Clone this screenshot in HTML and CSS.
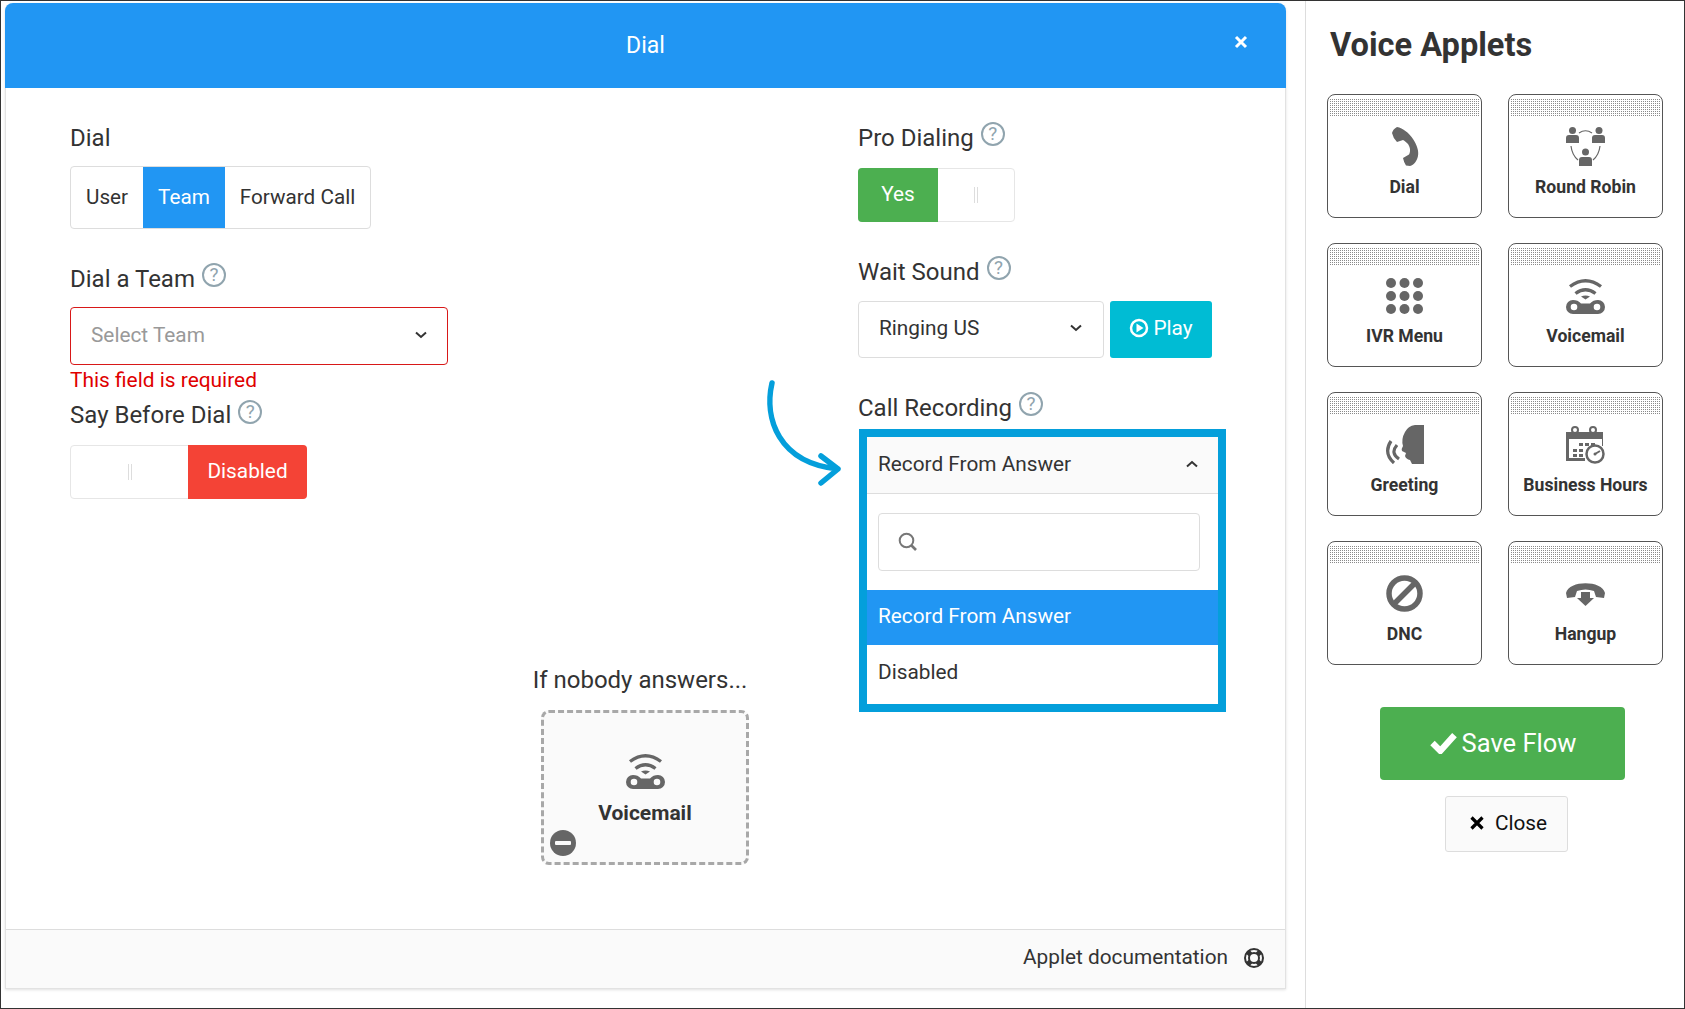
FILE: index.html
```html
<!DOCTYPE html>
<html lang="en">
<head>
<meta charset="utf-8">
<title>Dial</title>
<link rel="stylesheet" href="styles.css">
</head>
<body>
<svg class="defs" width="0" height="0">
  <defs>
    <symbol id="voicemail" viewBox="0 0 39 36">
      <path d="M4 8.500Q19.500-3 35 8.500M9.500 15.500Q19.500 8 29.500 15.500" fill="none" stroke="currentColor" stroke-width="3.400"/>
      <path d="M15 18.500Q19.500 16.500 24 18.500L19.500 21.500Z"/>
      <path fill-rule="evenodd" d="M7 22C10 22 13 23 15 25.500H24C26 23 29 22 32 22A7 7 0 0 1 32 36H7A7 7 0 0 1 7 22ZM8 25.700A3.300 3.300 0 1 0 8 32.300A3.300 3.300 0 1 0 8 25.700ZM31 25.700A3.300 3.300 0 1 0 31 32.300A3.300 3.300 0 1 0 31 25.700Z"/>
    </symbol>
  </defs>
</svg>
<div class="frame">
  <main class="modal">
    <header class="modal-head">
      <h1 class="modal-title">Dial</h1>
      <svg class="modal-x" width="14" height="14" viewBox="0 0 14 14"><path d="M2 2L12 12M12 2L2 12" stroke="#fff" stroke-width="3"/></svg>
    </header>
    <div class="modal-body">
      <section class="col-left">
        <div class="label">Dial</div>
        <div class="seg">
          <span class="seg-item">User</span>
          <span class="seg-item seg-on">Team</span>
          <span class="seg-item">Forward Call</span>
        </div>
        <div class="label label-team">Dial a Team <span class="help">?</span></div>
        <div class="select select-team">
          <span class="placeholder">Select Team</span>
          <svg class="chev" width="12" height="8" viewBox="0 0 12 8"><path d="M1 1.500L6 6L11 1.500" fill="none" stroke="#333" stroke-width="2"/></svg>
        </div>
        <div class="error">This field is required</div>
        <div class="label label-say">Say Before Dial <span class="help">?</span></div>
        <div class="toggle toggle-say">
          <span class="toggle-handle"><i></i><i></i></span>
          <span class="toggle-state state-off">Disabled</span>
        </div>
        <div class="nobody">
          <div class="nobody-text">If nobody answers...</div>
          <div class="drop-card">
            <svg class="drop-icon" width="39" height="36"><use href="#voicemail"/></svg>
            <div class="drop-name">Voicemail</div>
            <span class="remove"><i></i></span>
          </div>
        </div>
      </section>
      <section class="col-right">
        <svg class="arrow" width="80" height="110" viewBox="0 0 80 110"><path d="M9 5C1 40 15 85 75 91M58 78L75 91L58 105" fill="none" stroke="#049fdb" stroke-width="5.500" stroke-linecap="round" stroke-linejoin="round"/></svg>
        <div class="label">Pro Dialing <span class="help">?</span></div>
        <div class="toggle toggle-pro">
          <span class="toggle-state state-on">Yes</span>
          <span class="toggle-handle"><i></i><i></i></span>
        </div>
        <div class="label label-wait">Wait Sound <span class="help">?</span></div>
        <div class="sound-row">
          <div class="select select-sound">
            <span>Ringing US</span>
            <svg class="chev" width="12" height="8" viewBox="0 0 12 8"><path d="M1 1.500L6 6L11 1.500" fill="none" stroke="#333" stroke-width="2"/></svg>
          </div>
          <div class="play">
            <svg width="20" height="20" viewBox="0 0 20 20"><circle cx="10" cy="10" r="8" fill="none" stroke="#fff" stroke-width="2.500"/><path d="M7.500 5.500L14.500 10L7.500 14.500Z" fill="#fff"/></svg>
            <span>Play</span>
          </div>
        </div>
        <div class="label label-call">Call Recording <span class="help">?</span></div>
        <div class="highlight">
          <div class="dd-head">
            <span>Record From Answer</span>
            <svg width="12" height="8" viewBox="0 0 12 8"><path d="M1 6.500L6 2L11 6.500" fill="none" stroke="#333" stroke-width="2"/></svg>
          </div>
          <div class="dd-search">
            <svg width="20" height="20" viewBox="0 0 20 20"><circle cx="8.500" cy="8.500" r="6.800" fill="none" stroke="#777" stroke-width="2"/><path d="M13.500 13.500L18 18" stroke="#777" stroke-width="2.600"/></svg>
          </div>
          <div class="dd-option dd-active">Record From Answer</div>
          <div class="dd-option dd-plain">Disabled</div>
        </div>
      </section>
    </div>
    <footer class="modal-foot">
      <span>Applet documentation</span>
      <svg width="20" height="20" viewBox="0 0 20 20"><circle cx="10" cy="10" r="9" fill="none" stroke="#333" stroke-width="2"/><circle cx="10" cy="10" r="5" fill="none" stroke="#333" stroke-width="2"/><path d="M3.500 3.500L6.500 6.500M16.500 3.500L13.500 6.500M3.500 16.500L6.500 13.500M16.500 16.500L13.500 13.500" stroke="#333" stroke-width="5"/></svg>
    </footer>
  </main>
  <aside class="sidebar">
    <h2 class="side-title">Voice Applets</h2>
    <div class="applets">
      <div class="applet"><div class="applet-band"></div><div class="applet-icon">
        <svg width="28" height="39" viewBox="0 0 28 39"><path d="M6 0C12 1 18 6 22 12C26 18 28 24 27 29C26 34 23 38 19 39L15 38.500Q13 36 12 31L18 27.500C20 24 19 20 17 17C15 15 14 14 12 13L6 15Q2 11 1 6Q2 2 6 0Z"/></svg>
      </div><div class="applet-name">Dial</div></div>
      <div class="applet"><div class="applet-band"></div><div class="applet-icon">
        <svg width="39" height="39" viewBox="0 0 39 39"><circle cx="6.500" cy="3.500" r="3.500"/><circle cx="33" cy="3.500" r="3.500"/><circle cx="19.500" cy="25" r="3.500"/><path d="M0 16V11Q0 8 3 8H10Q13 8 13 11V16ZM26 16V11Q26 8 29 8H36Q39 8 39 11V16ZM13 39V33Q13 30 16 30H23Q26 30 26 33V39Z"/><path d="M13 6Q19.500 1.500 26 6M5 19Q6 28 12 33M34 19Q33 28 27 33" fill="none" stroke="currentColor" stroke-width="1.200"/></svg>
      </div><div class="applet-name">Round Robin</div></div>
      <div class="applet"><div class="applet-band"></div><div class="applet-icon">
        <svg width="37" height="36" viewBox="0 0 37 36"><circle cx="5" cy="5" r="5"/><circle cx="18.500" cy="5" r="5"/><circle cx="32" cy="5" r="5"/><circle cx="5" cy="18" r="5"/><circle cx="18.500" cy="18" r="5"/><circle cx="32" cy="18" r="5"/><circle cx="5" cy="31" r="5"/><circle cx="18.500" cy="31" r="5"/><circle cx="32" cy="31" r="5"/></svg>
      </div><div class="applet-name">IVR Menu</div></div>
      <div class="applet"><div class="applet-band"></div><div class="applet-icon">
        <svg width="39" height="36"><use href="#voicemail"/></svg>
      </div><div class="applet-name">Voicemail</div></div>
      <div class="applet"><div class="applet-band"></div><div class="applet-icon">
        <svg width="39" height="39" viewBox="0 0 39 39"><path d="M39 0V39H27Q26 37 25 35Q21 34 20 31L21 28L17 26Q16 24 18 21Q16 14 20 7Q23 1 30 0Z"/><path d="M6 16Q-2 28 9 38M12 20Q5 28 14 34" fill="none" stroke="currentColor" stroke-width="3.200"/></svg>
      </div><div class="applet-name">Greeting</div></div>
      <div class="applet"><div class="applet-band"></div><div class="applet-icon">
        <svg width="39" height="39" viewBox="0 0 39 39"><path d="M0 7H37V21H36V14H3V33H19V36H0Z"/><circle cx="9" cy="5" r="3" fill="none" stroke="currentColor" stroke-width="2"/><circle cx="27" cy="5" r="3" fill="none" stroke="currentColor" stroke-width="2"/><path d="M7 24h4v3h-4zM13 24h4v3h-4zM7 29h4v3h-4zM13 29h4v3h-4zM13 18h4v3h-4zM19 18h4v3h-4zM25 18h4v3h-4z"/><circle cx="29" cy="29" r="8.500" fill="#fff" stroke="currentColor" stroke-width="2.500"/><path d="M29 29L34 26" stroke="currentColor" stroke-width="2"/><circle cx="29" cy="29" r="1.500"/></svg>
      </div><div class="applet-name">Business Hours</div></div>
      <div class="applet"><div class="applet-band"></div><div class="applet-icon">
        <svg width="37" height="37" viewBox="0 0 37 37"><circle cx="18.500" cy="18.500" r="15.500" fill="none" stroke="currentColor" stroke-width="5.500"/><path d="M8 29L29 8" stroke="currentColor" stroke-width="5.500"/></svg>
      </div><div class="applet-name">DNC</div></div>
      <div class="applet"><div class="applet-band"></div><div class="applet-icon">
        <svg width="39" height="25" viewBox="0 0 39 25"><path d="M0 12C3-1 36-1 39 12L38 17L30 16L28 10Q19.500 7 11 10L9 16L1 17Z"/><path d="M15 11H24V17H28L19.500 25L11 17H15Z"/></svg>
      </div><div class="applet-name">Hangup</div></div>
    </div>
    <div class="save">
      <svg width="29" height="22" viewBox="0 0 27 21"><path d="M3 10.500L10.500 18L24 3" fill="none" stroke="#fff" stroke-width="6"/></svg>
      <span>Save Flow</span>
    </div>
    <div class="close">
      <svg width="14" height="14" viewBox="0 0 14 14"><path d="M1.500 1.500L12.500 12.500M12.500 1.500L1.500 12.500" stroke="#000" stroke-width="3.200"/></svg>
      <span>Close</span>
    </div>
  </aside>
</div>
</body>
</html>
```
FILE: styles.css
```css
* { box-sizing: border-box; }
html, body { margin: 0; padding: 0; background: #fff; }
body { font-family: Roboto, "Liberation Sans", sans-serif; color: #333; }
.defs { position: absolute; }
.frame {
  width: 1685px; height: 1009px; border: 1px solid #333;
  display: flex; overflow: hidden; background: #fff;
}
.modal {
  width: 1281px; height: 986px; margin: 2px 0 0 4px;
  display: flex; flex-direction: column;
  border: 1px solid #e2e2e2; border-top: 0; border-radius: 8px 8px 0 0;
  box-shadow: 0 1px 3px rgba(0,0,0,.12);
}
.modal-head {
  height: 85px; background: #2196f3; color: #fff; border-radius: 8px 8px 0 0;
  margin: 0 -1px; display: flex; align-items: center; justify-content: center; position: relative;
}
.modal-title { margin: 0; font-size: 23px; font-weight: 400; line-height: 28px; }
.modal-x { position: absolute; right: 38px; top: 32px; }
.modal-body { flex: 1; display: grid; grid-template-columns: 788px 1fr; padding: 35px 0 0 64px; }
.col-left, .col-right { display: flex; flex-direction: column; align-items: flex-start; }
.col-right { position: relative; }
.arrow { position: absolute; left: -95px; top: 255px; }

.label { display: flex; align-items: flex-start; gap: 1px; font-size: 24px; line-height: 30px; height: 28px; color: #333; white-space: pre; }
.help {
  width: 24px; height: 24px; margin-top: -1px; border: 2px solid #90a4ae; border-radius: 50%;
  color: #90a4ae; font-size: 19px; line-height: 20px; text-align: center; font-weight: 400;
}
.seg { display: flex; height: 63px; margin-top: 15px; border: 1px solid #ddd; border-radius: 4px; font-size: 20.700px; }
.seg-item { padding: 0 15px; line-height: 60px; }
.seg-on { background: #2196f3; color: #fff; }
.label-team { margin-top: 35px; }
.select {
  display: flex; align-items: center; justify-content: space-between;
  background: #fff; border: 1px solid #ddd; border-radius: 4px; font-size: 20.800px; padding-bottom: 3px;
}
.select-team { width: 378px; height: 58px; margin-top: 15px; padding-left: 20px; padding-right: 20px; border-color: #d81818; }
.placeholder { color: #999; }
.error { margin-top: 2px; font-size: 20.900px; line-height: 26px; color: #e00000; }
.label-say { margin-top: 8px; line-height: 28px; }
.toggle { display: flex; height: 54px; border: 1px solid #e6e6e6; border-radius: 4px; font-size: 20.800px; color: #fff; }
.toggle-say { width: 237px; margin-top: 16px; }
.toggle-pro { width: 157px; margin-top: 17px; }
.toggle-handle { flex: 1; display: flex; align-items: center; justify-content: center; gap: 2px; }
.toggle-handle i { width: 1px; height: 16px; background: #ddd; }
.toggle-state { display: flex; align-items: center; justify-content: center; margin: -1px; padding-bottom: 2px; }
.state-off { width: 119px; background: #f44336; border-radius: 0 4px 4px 0; }
.state-on { width: 80px; background: #4caf50; border-radius: 4px 0 0 4px; padding-bottom: 3px; }
.nobody { margin: 167px 0 0 464px; width: 222px; display: flex; flex-direction: column; align-items: center; }
.nobody-text { font-size: 24px; line-height: 28px; white-space: nowrap; margin-right: 10px; }
.drop-card {
  position: relative; width: 208px; height: 155px; margin-top: 16px;
  background: #fafafa; border: 3px dashed #a8a8a8; border-radius: 8px;
  display: flex; flex-direction: column; align-items: center; padding-top: 40px; color: #666;
}
.drop-icon { fill: currentColor; }
.drop-name { margin-top: 11px; font-size: 21px; line-height: 26px; font-weight: 700; color: #333; }
.remove { position: absolute; left: 6px; bottom: 6px; width: 26px; height: 26px; border-radius: 50%; background: #666; display: flex; align-items: center; justify-content: center; }
.remove i { width: 16px; height: 4px; background: #fafafa; border-radius: 1px; }

.label-wait { margin-top: 35px; }
.sound-row { display: flex; gap: 6px; margin-top: 16px; }
.select-sound { width: 246px; height: 57px; padding-left: 20px; padding-right: 21px; }
.play { width: 102px; height: 57px; background: #00bcd4; color: #fff; border-radius: 3px; font-size: 20.800px; display: flex; align-items: center; justify-content: center; gap: 4px; padding-bottom: 4px; }
.label-call { margin-top: 35px; }
.highlight { width: 367px; height: 283px; margin: 8px 0 0 1px; border: 8px solid #049fdb; font-size: 20.800px; background: #fff; }
.dd-head { height: 57px; padding: 0 12px 3px 11px; background: #fafafa; border-bottom: 1px solid #ddd; display: flex; align-items: center; justify-content: space-between; }
.dd-head svg { margin-right: 8px; }
.dd-search { margin: 19px 18px 19px 11px; height: 58px; border: 1px solid #ddd; border-radius: 4px; display: flex; align-items: center; padding-left: 19px; }
.dd-option { padding-left: 11px; }
.dd-active { height: 55px; line-height: 53px; background: #2196f3; color: #fff; }
.dd-plain { height: 59px; line-height: 54px; }
.modal-foot { height: 59px; background: #fafafa; border-top: 1px solid #ddd; display: flex; align-items: center; justify-content: flex-end; gap: 16px; padding: 0 21px 5px 0; font-size: 20.800px; }
.modal-foot svg { margin-top: 2px; }

.sidebar { flex: 1; margin-left: 19px; padding: 24px 0 0 21px; border-left: 1px solid #ddd; display: flex; flex-direction: column; align-items: flex-start; }
.side-title { margin: 0 0 0 3px; font-size: 32.600px; line-height: 40px; font-weight: 700; color: #333; }
.applets { margin-top: 29px; display: grid; grid-template-columns: 155px 155px; grid-auto-rows: 124px; column-gap: 26px; row-gap: 25px; }
.applet { border: 1px solid #555; border-radius: 8px; background: #fff; color: #666; display: flex; flex-direction: column; align-items: center; overflow: hidden; }
.applet-band {
  width: calc(100% - 2px); height: 19px; flex: none; margin-top: 3px;
  background-color: #8a8a8a;
  background-image: linear-gradient(#fff 1px, transparent 1px), linear-gradient(90deg, #fff 1px, transparent 1px);
  background-size: 2px 2px;
}
.applet-icon { height: 39px; margin-top: 10px; display: flex; align-items: center; justify-content: center; flex: none; }
.applet-icon svg { fill: currentColor; display: block; }
.applet-name { margin-top: 9px; font-size: 17.600px; line-height: 24px; font-weight: 700; color: #333; white-space: nowrap; }
.save { width: 245px; height: 73px; margin: 42px 0 0 53px; background: #4caf50; color: #fff; border-radius: 4px; font-size: 25.500px; display: flex; align-items: center; justify-content: center; gap: 4px; padding-bottom: 1px; }
.close { width: 123px; height: 56px; margin: 16px 0 0 118px; background: #fafafa; color: #111; border: 1px solid #ddd; border-radius: 3px; font-size: 20.800px; display: flex; align-items: center; justify-content: center; gap: 11px; padding: 0 0 3px 4px; }
```
